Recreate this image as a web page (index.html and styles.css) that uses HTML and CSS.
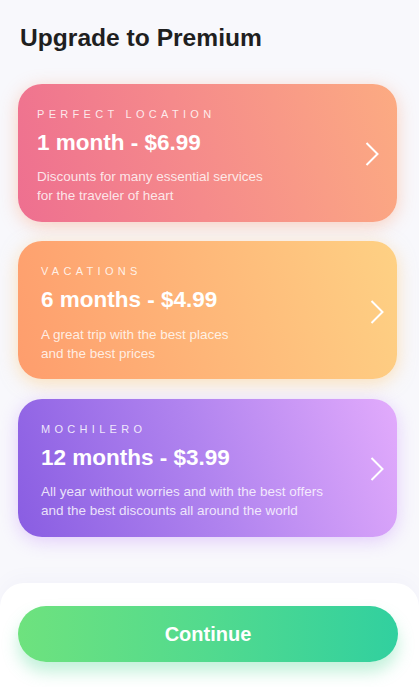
FILE: index.html
```html
<!DOCTYPE html>
<html lang="en">
<head>
<meta charset="utf-8">
<title>Upgrade to Premium</title>
<link rel="stylesheet" href="styles.css">
</head>
<body>
<main class="page">
  <h1 class="title">Upgrade to Premium</h1>
  <section class="plans">
    <a class="plan plan-pink" href="#">
      <div class="plan-text">
        <div class="plan-label">PERFECT LOCATION</div>
        <div class="plan-price">1 month - $6.99</div>
        <p class="plan-desc">Discounts for many essential services<br>for the traveler of heart</p>
      </div>
      <svg class="chev" width="14" height="24" viewBox="0 0 14 24"><polyline points="1.5,1 12.5,12 1.5,23" fill="none" stroke="#fff" stroke-width="2"/></svg>
    </a>
    <a class="plan plan-orange" href="#">
      <div class="plan-text">
        <div class="plan-label">VACATIONS</div>
        <div class="plan-price">6 months - $4.99</div>
        <p class="plan-desc">A great trip with the best places<br>and the best prices</p>
      </div>
      <svg class="chev" width="14" height="24" viewBox="0 0 14 24"><polyline points="1.5,1 12.5,12 1.5,23" fill="none" stroke="#fff" stroke-width="2"/></svg>
    </a>
    <a class="plan plan-purple" href="#">
      <div class="plan-text">
        <div class="plan-label">MOCHILERO</div>
        <div class="plan-price">12 months - $3.99</div>
        <p class="plan-desc">All year without worries and with the best offers<br>and the best discounts all around the world</p>
      </div>
      <svg class="chev" width="14" height="24" viewBox="0 0 14 24"><polyline points="1.5,1 12.5,12 1.5,23" fill="none" stroke="#fff" stroke-width="2"/></svg>
    </a>
  </section>
</main>
<footer class="panel">
  <button class="continue" type="button">Continue</button>
</footer>
</body>
</html>
```
FILE: styles.css
```css
* { box-sizing: border-box; }
html, body {
  margin: 0;
  padding: 0;
}
body {
  background: #f8f8fc;
  font-family: "Liberation Sans", Arial, Helvetica, sans-serif;
  width: 419px;
  height: 687px;
  overflow: hidden;
  display: flex;
  flex-direction: column;
}
.page {
  padding: 24px 22px 0 18px;
}
.title {
  margin: 0 0 0 2px;
  font-size: 24.6px;
  line-height: 28px;
  font-weight: 700;
  color: #1f1f1f;
}
.plans {
  margin-top: 31.5px;
  display: flex;
  flex-direction: column;
  gap: 19.5px;
}
.plan {
  height: 138px;
  border-radius: 24px;
  display: flex;
  align-items: center;
  justify-content: space-between;
  padding: 0 13px 0 23px;
  color: #fff;
  text-decoration: none;
}
.plan-pink {
  padding: 0 18px 0 19px;
  background: linear-gradient(75deg, #ee6f90 0%, #f58a8b 45%, #fcab82 100%);
  box-shadow: 0 4px 18px rgba(251, 160, 120, 0.45);
}
.plan-orange {
  background: linear-gradient(75deg, #fe9d6d 0%, #feb779 50%, #fed184 100%);
  box-shadow: 0 4px 18px rgba(254, 200, 120, 0.5);
}
.plan-purple {
  background: linear-gradient(70deg, #895de2 0%, #b184ef 50%, #e2abfc 100%);
  box-shadow: 0 4px 18px rgba(200, 150, 250, 0.45);
}
.plan-text {
  display: flex;
  flex-direction: column;
  padding-top: 7.5px;
}
.plan-label {
  font-size: 11px;
  line-height: 14px;
  letter-spacing: 4.3px;
  color: rgba(255, 255, 255, 0.85);
}
.plan-price {
  margin-top: 9.2px;
  font-size: 22.5px;
  line-height: 26px;
  font-weight: 700;
}
.plan-desc {
  margin: 12.5px 0 0;
  font-size: 13.5px;
  line-height: 18.7px;
  color: rgba(255, 255, 255, 0.82);
}
.chev {
  flex: none;
  margin-top: 3px;
}
.panel {
  margin-top: auto;
  height: 104px;
  background: #fff;
  border-radius: 24px 24px 0 0;
  padding: 23px 21px 0 18px;
  box-shadow: 0 -6px 16px rgba(120, 120, 200, 0.04);
}
.continue {
  display: block;
  width: 100%;
  height: 56px;
  border: 0;
  border-radius: 28px;
  background: linear-gradient(90deg, #6ee27e 0%, #52da8e 50%, #31d09f 100%);
  box-shadow: 0 10px 16px rgba(80, 215, 150, 0.35);
  color: #fff;
  font-family: "Liberation Sans", Arial, Helvetica, sans-serif;
  font-size: 20px;
  font-weight: 700;
  cursor: pointer;
}
```
